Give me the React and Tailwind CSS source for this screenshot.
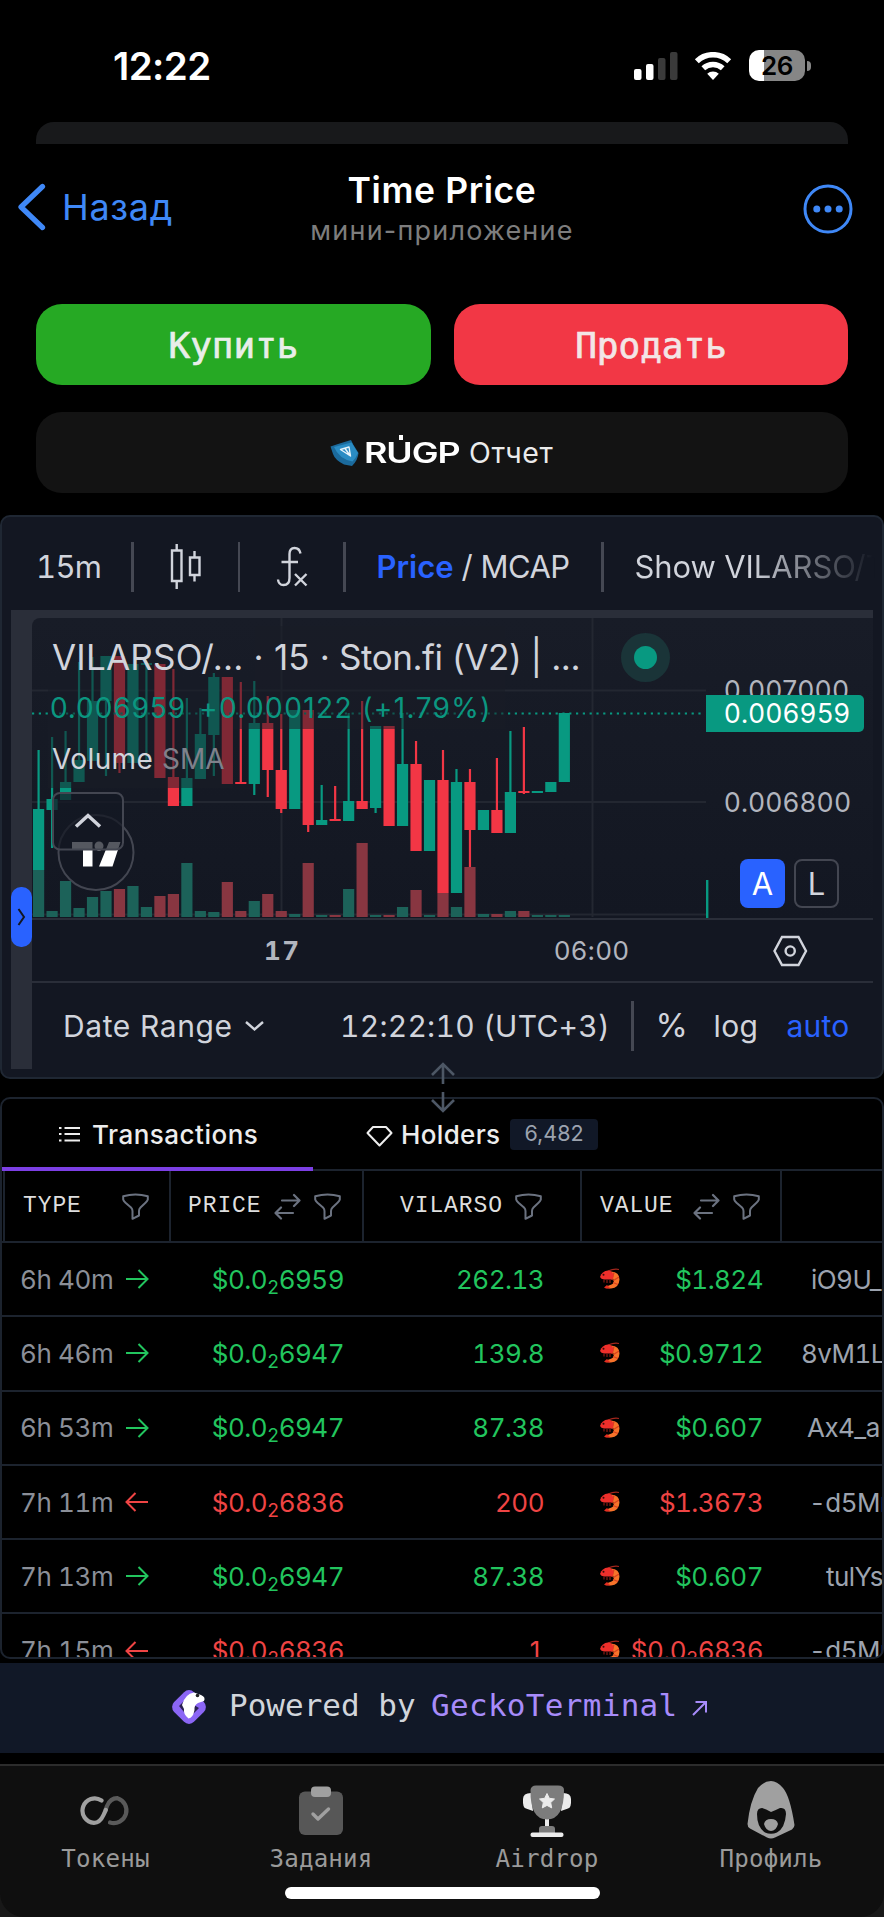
const UP = "#089981";
const DOWN = "#f23645";
const PLOT_LEFT = 32;
const PLOT_TOP = 618;
const STEP = 13.48;

// [up, wick top, body top, body bottom, wick bottom, volume top]
const candles = [
  [1, 750, 809, 870, 870, 870],
  [1, 737, 799, 810, 848, 911],
  [1, 731, 782, 800, 800, 881],
  [1, 662, 760, 782, 782, 908],
  [1, 657, 701, 761, 761, 897],
  [1, 656, 656, 701, 776, 891],
  [0, 656, 656, 763, 773, 889],
  [1, 664, 664, 763, 763, 886],
  [1, 664, 663, 665, 763, 907],
  [0, 664, 664, 778, 778, 896],
  [0, 669, 777, 806, 806, 894],
  [1, 698, 778, 806, 806, 863],
  [1, 708, 734, 779, 779, 911],
  [1, 673, 677, 735, 776, 912],
  [0, 677, 677, 784, 784, 882],
  [0, 682, 782, 784, 784, 911],
  [1, 681, 723, 784, 795, 901],
  [0, 696, 723, 770, 797, 894],
  [0, 714, 770, 809, 813, 911],
  [1, 710, 710, 809, 809, 914],
  [0, 710, 710, 825, 832, 863],
  [1, 785, 820, 825, 825, 915],
  [0, 786, 819, 821, 821, 915],
  [1, 713, 801, 821, 821, 889],
  [0, 701, 801, 809, 809, 843],
  [1, 726, 726, 808, 813, 915],
  [0, 726, 726, 826, 826, 915],
  [1, 713, 764, 826, 826, 907],
  [0, 741, 764, 851, 851, 890],
  [1, 780, 780, 851, 851, 915],
  [0, 750, 780, 893, 893, 893],
  [1, 769, 782, 893, 893, 907],
  [0, 769, 782, 830, 867, 867],
  [1, 810, 810, 830, 830, 914],
  [0, 758, 810, 833, 833, 914],
  [1, 731, 792, 833, 833, 911],
  [0, 727, 791, 793, 794, 911],
  [1, 791, 791, 793, 793, 915],
  [1, 782, 782, 792, 792, 915],
  [1, 713, 713, 782, 782, 915],
];

const transactions = [
  { age: "6h 40m", buy: true, price: "6959", amount: "262.13", value: "$1.824", from: "iO9U_", pad: "pl-[48px]" },
  { age: "6h 46m", buy: true, price: "6947", amount: "139.8", value: "$0.9712", from: "8vM1L", pad: "pl-[38px]" },
  { age: "6h 53m", buy: true, price: "6947", amount: "87.38", value: "$0.607", from: "Ax4_a", pad: "pl-[44px]" },
  { age: "7h 11m", buy: false, price: "6836", amount: "200", value: "$1.3673", from: "-d5Mr", pad: "pl-[46px]" },
  { age: "7h 13m", buy: true, price: "6947", amount: "87.38", value: "$0.607", from: "tulYs", pad: "pl-[63px]" },
  { age: "7h 15m", buy: false, price: "6836", amount: "1", value: "sub", from: "-d5Mr", pad: "pl-[46px]" },
];

function StatusBar() {
  return (
    <div className="flex h-[122px] items-start pt-[50px]">
      <div className="ml-[113px] w-[521px] text-[38.5px] leading-[32px] font-semibold tracking-[-0.6px] text-white">
        12:22
      </div>
      <svg className="mt-[2px] h-[28px] w-[44px]" viewBox="0 0 44 28">
        <rect x="0" y="17" width="7.5" height="11" rx="2" fill="#fff" />
        <rect x="12" y="12" width="7.5" height="16" rx="2" fill="#fff" />
        <rect x="24" y="6" width="7.5" height="22" rx="2" fill="#3a3a3a" />
        <rect x="36" y="0" width="7.5" height="28" rx="2" fill="#3a3a3a" />
      </svg>
      <svg className="mt-[2px] ml-[16px] h-[28px] w-[38px]" viewBox="0 0 38 28">
        <path d="M2.8 10.2a23.5 23.5 0 0 1 32.4 0" fill="none" stroke="#fff" strokeWidth="5.6" transform="translate(0 -1)" />
        <path d="M9.3 16.3a14.2 14.2 0 0 1 19.4 0" fill="none" stroke="#fff" strokeWidth="5.4" />
        <path d="M19 28l-5.8-6.2a8.2 8.2 0 0 1 11.6 0z" fill="#fff" />
      </svg>
      <div className="ml-[17px] h-[31px] w-[56px] rounded-[10px] bg-[linear-gradient(90deg,#fff_15px,#868686_15px)] text-center text-[26px] leading-[32px] font-semibold tracking-[-0.3px] text-black">
        26
      </div>
      <div className="mt-[11px] ml-[2px] h-[10px] w-[3.5px] rounded-r-full bg-[#868686]" />
    </div>
  );
}

function Header() {
  return (
    <header className="flex h-[160px]">
      <div className="flex h-[126px] w-[264px] items-center pl-[17px] text-[#3f88f7]">
        <svg className="h-[48px] w-[30px]" viewBox="0 0 30 48" fill="none" stroke="currentColor" strokeWidth="5.2" strokeLinecap="round" strokeLinejoin="round">
          <path d="M25.5 3.5L4 24l21.5 20.5" />
        </svg>
        <span className="ml-[15px] text-[36px] tracking-[0.7px]">Назад</span>
      </div>
      <div className="w-[356px] pt-[25px] text-center">
        <h1 className="text-[35.5px] leading-[44px] font-semibold tracking-[0.6px] text-white">Time Price</h1>
        <p className="text-[27px] leading-[36px] tracking-[1.2px] text-[#7d7d7d]">мини-приложение</p>
      </div>
      <svg className="mt-[39px] ml-[182px] h-[52px] w-[52px] text-[#3f88f7]" viewBox="0 0 52 52" fill="currentColor">
        <circle cx="26" cy="26" r="23" fill="none" stroke="currentColor" strokeWidth="3" />
        <circle cx="14.8" cy="26" r="3.5" />
        <circle cx="26" cy="26" r="3.5" />
        <circle cx="37.2" cy="26" r="3.5" />
      </svg>
    </header>
  );
}

function Actions() {
  return (
    <div className="grid h-[211px] grid-cols-[395px_394px] gap-x-[23px] gap-y-[27px] px-[36px] [grid-template-rows:81px_81px]">
      <button className="rounded-[26px] bg-[#26a924] pt-[3px] text-[36px] text-[#e9eee9] [-webkit-text-stroke:0.7px_#e9eee9] [font-family:'DejaVu_Sans_Mono',monospace]">
        Купить
      </button>
      <button className="rounded-[26px] bg-[#f23745] pt-[3px] text-[36px] text-[#f3e6e6] [-webkit-text-stroke:0.7px_#f3e6e6] [font-family:'DejaVu_Sans_Mono',monospace]">
        Продать
      </button>
      <button className="col-span-2 flex items-center rounded-[26px] bg-[#131313] pl-[294px] text-left text-white">
        <svg className="h-[28px] w-[30px]" viewBox="0 0 30 28">
          <path d="M.500 7.500L8 5 21 1l2.500 5L28.500 14Q28 21 22 27L14 25.500Q5 21 3 15z" fill="#1b6a9c" />
          <path d="M4 8L21.500 3.500 28 14Q26 19 22.500 22.500Q9 20 4 8z" fill="#2a8cc4" />
          <path d="M10.500 10.500L19 8l1.500 9zM15 9.500l5.500 7.500" fill="none" stroke="#e8f4fb" strokeWidth="1.4" strokeLinejoin="round" />
        </svg>
        <span className="relative ml-[4px] w-[105px]">
          <span className="inline-block origin-left scale-x-[1.28] text-[28px] font-semibold tracking-[-0.8px]">RUGP</span>
          <span className="absolute top-[3px] left-[35px] h-[5px] w-[4px] bg-white" />
        </span>
        <span className="pt-[1px] text-[28.500px] tracking-[0.6px] text-[#ebebeb]">Отчет</span>
      </button>
    </div>
  );
}

function Divider() {
  return <span className="h-[50px] w-[2.5px] shrink-0 bg-[#454853]" />;
}

function ChartToolbar() {
  return (
    <div className="flex h-[95px] items-center overflow-hidden pt-[9px] text-[31px] whitespace-nowrap text-[#d1d4dc]">
      <span className="ml-[34px] w-[95px] shrink-0 tracking-[-0.700px] tabular-nums">15m</span>
      <Divider />
      <svg className="mx-[36px] h-[48px] w-[32px] shrink-0" viewBox="0 0 32 48" fill="none" stroke="currentColor" strokeWidth="2.4">
        <path d="M6.700 1v6.500M6.700 38v8M2 7.500h9.500v30.500H2zM24.500 8v6.500M24.500 32v6.500M20 14.500h9.500V32H20z" />
      </svg>
      <Divider />
      <svg className="mx-[33.500px] h-[42px] w-[36px] shrink-0" viewBox="0 0 36 42" fill="none" stroke="currentColor" strokeWidth="2.400">
        <path d="M26.500 7.500Q25.500 2 20.500 2Q15.500 2 15.500 8V32Q15.500 39 9.500 39Q4.500 39 4 33.500M7.500 16h16.500M21 28l11.500 11.500M32.500 28L21 39.500" />
      </svg>
      <Divider />
      <span className="ml-[31px] w-[85px] shrink-0 font-semibold tracking-[0px] text-[#2962ff]">Price</span>
      <span className="w-[139.500px] shrink-0 tracking-[-0.500px]">/ MCAP</span>
      <Divider />
      <span className="ml-[31px] w-[240px] shrink-0 bg-[linear-gradient(90deg,#d1d4dc_48%,#131722_99%)] bg-clip-text tracking-[-0.100px] text-transparent">
        Show VILARSO/T
      </span>
    </div>
  );
}

function Plot() {
  return (
    <svg className="block h-[300px] w-[841px]" viewBox={`${PLOT_LEFT} ${PLOT_TOP} 841 300`}>
      <g stroke="#232731" strokeWidth="2">
        <path d="M281.500 618V917M592.500 618V917M32 690.500H706M32 802H706M32 914.500H706" />
      </g>
      {candles.map(([up, wickTop, top, bottom, wickBottom, volume], i) => {
        const x = 33 + i * STEP;
        const color = up ? UP : DOWN;
        return (
          <g key={i} fill={color}>
            <rect x={x} y={volume} width="11.200" height={917 - volume} fill={up ? "#1c6259" : "#883641"} />
            <rect x={x + 4.500} y={wickTop} width="2.200" height={wickBottom - wickTop} />
            <rect x={x} y={top} width="11.200" height={bottom - top} />
          </g>
        );
      })}
      <rect x="706" y="880" width="2.400" height="38" fill={UP} />
      <path d="M32 713.500H702" stroke={UP} strokeWidth="2" strokeDasharray="2.200 4.600" />
      <g fill="#181c27" opacity="0.52">
        <rect x="48" y="626" width="457" height="103" />
        <rect x="48" y="729" width="185" height="59" />
      </g>
    </svg>
  );
}

function PriceScale() {
  return (
    <div className="absolute top-0 left-[674px] h-[300px] w-[167px] text-[26.500px] leading-[37px] tracking-[0.600px] text-[#b2b5be]">
      <div className="absolute top-[54px] left-[18px]">0.007000</div>
      <div className="absolute top-[77px] left-0 h-[37px] w-[158px] rounded-r-[5px] bg-[#089981] pl-[18px] text-white">
        0.006959
      </div>
      <div className="absolute top-[165.500px] left-[18px]">0.006800</div>
      <div className="absolute top-[241px] left-[34px] flex gap-[9px] text-[31px] leading-[49px] tracking-normal text-[#d1d4dc]">
        <span className="h-[49px] w-[45px] rounded-[8px] bg-[#2962ff] text-center text-white">A</span>
        <span className="h-[49px] w-[45px] rounded-[8px] border-2 border-[#434651] text-center leading-[46px]">L</span>
      </div>
    </div>
  );
}

function Legend() {
  return (
    <div className="absolute top-0 left-[20px] whitespace-nowrap text-[#d1d4dc]">
      <div className="flex h-[78px] items-center text-[35px]">
        <span className="w-[287px] tracking-[0.200px]">VILARSO/... · 15 ·</span>
        <span className="w-[245px] tracking-[-0.450px]">Ston.fi (V2) | ...</span>
        <span className="mt-[1px] ml-[37px] flex h-[49px] w-[49px] items-center justify-center rounded-full bg-[#1a3438]">
          <span className="h-[23px] w-[23px] rounded-full bg-[#089981]" />
        </span>
      </div>
      <div className="-ml-[2px] flex h-[24px] items-center text-[28px] tracking-[0.900px] text-[#0b9680]">
        <span className="w-[149px]">0.006959</span>
        <span className="tracking-[1.400px]">+0.000122 (+1.79%)</span>
      </div>
      <div className="flex h-[78px] items-center text-[28px]">
        <span className="w-[110px] tracking-[0.400px]">Volume</span>
        <span className="text-[#7e818b]">SMA</span>
      </div>
    </div>
  );
}

function TradingViewBadge() {
  return (
    <svg className="absolute top-[172px] left-[18px] h-[122px] w-[90px]" viewBox="50 790 90 122">
      <circle cx="96" cy="852.500" r="37.500" fill="#131722" stroke="#434651" strokeWidth="2" />
      <path d="M72 842h20.500v24.500H83V849.500H72zM109 842h11.500l-8 24.500H99z" fill="#fff" />
      <circle cx="99" cy="846" r="4.500" fill="#fff" />
      <rect x="53" y="793" width="70" height="56.500" rx="7" fill="#141823" fillOpacity="0.720" stroke="#434651" strokeWidth="2" />
      <path d="M76 826.500L88 815.500l12 11" fill="none" stroke="#d1d4dc" strokeWidth="3.500" />
    </svg>
  );
}

function ChartPanel() {
  return (
    <section className="relative h-[564px] rounded-[10px] border-2 border-[#1f2733] bg-[#131722]">
      <div className="-mt-[2px]">
        <ChartToolbar />
      </div>
      <div className="mx-[9px] flex h-[459px] bg-[linear-gradient(#2a2e39,#2a2e39)] bg-[length:100%_20px] bg-no-repeat">
        <div className="flex w-[21px] shrink-0 items-center bg-[#2a2e39] pt-[155px]">
          <div className="flex h-[60px] w-[21px] items-center justify-center rounded-[10px] bg-[#2962ff]">
            <svg className="h-[18px] w-[9px]" viewBox="0 0 9 18" fill="none" stroke="#131722" strokeWidth="2">
              <path d="M1.500 1L7 9l-5.500 8" />
            </svg>
          </div>
        </div>
        <div className="mt-[8px] flex-1 rounded-tl-[8px] bg-[linear-gradient(#181c27,#131722_300px)]">
          <div className="relative">
            <Plot />
            <PriceScale />
            <Legend />
            <TradingViewBadge />
          </div>
          <div className="flex h-[63px] items-center border-t-2 border-[#2a2e39] text-[26px] text-[#b2b5be]">
            <span className="w-[316px] pl-[232px] font-bold tracking-[1.500px] tabular-nums">17</span>
            <span className="ml-[206px] w-[218px] tracking-[0.500px]">06:00</span>
            <svg className="h-[32px] w-[36px] text-[#d1d4dc]" viewBox="0 0 36 32" fill="none" stroke="currentColor" strokeWidth="2.400">
              <path d="M10 2h16.500l7.500 14-7.500 14H10L2.500 16z" />
              <circle cx="18.200" cy="16" r="4.600" />
            </svg>
          </div>
          <div className="flex h-[88px] items-center border-t-2 border-[#2a2e39] text-[30px] whitespace-nowrap text-[#d1d4dc]">
            <span className="ml-[31px] w-[182px] tracking-[0.600px]">Date Range</span>
            <svg className="h-[12px] w-[19px]" viewBox="0 0 19 12" fill="none" stroke="currentColor" strokeWidth="2.400">
              <path d="M1 2l8.500 7.500L18 2" />
            </svg>
            <span className="ml-[76px] w-[291px] tracking-[0.250px] tabular-nums">12:22:10 (UTC+3)</span>
            <Divider />
            <span className="ml-[22px] w-[58px] text-[33px]">%</span>
            <span className="w-[73px] tracking-[0.400px]">log</span>
            <span className="tracking-[0.200px] text-[#2962ff]">auto</span>
          </div>
        </div>
      </div>
    </section>
  );
}

function ResizeHandle() {
  return (
    <div className="relative z-10 h-[18px]">
      <svg className="absolute -top-[17px] left-[429px] h-[52px] w-[28px]" viewBox="0 0 28 52" fill="none" stroke="#4d5765" strokeWidth="2.600">
        <path d="M14 2v20M3 13L14 2l11 11M14 30v19M3 38l11 11 11-11" />
      </svg>
    </div>
  );
}

function Funnel() {
  return (
    <svg className="h-[27px] w-[27px] shrink-0" viewBox="0 0 27 27" fill="none" stroke="#6b7280" strokeWidth="2" strokeLinejoin="round">
      <path d="M1.200 3.200Q13.500 0 25.800 3.200V6.500Q25.500 8 23.500 9.800L18.500 14.500Q17 16 17 18V22.500L10.500 25.800V18Q10.500 16 9 14.500L3.500 9.800Q1.500 8 1.200 6.500z" />
    </svg>
  );
}

function Swap() {
  return (
    <svg className="h-[27px] w-[27px] shrink-0" viewBox="0 0 27 27" fill="none" stroke="#6b7280" strokeWidth="2.200" strokeLinecap="round" strokeLinejoin="round">
      <path d="M8 7.500h17.500M20 2l5.500 5.500L20 13M19 20H1.500M7 14.500L1.500 20 7 25.500" />
    </svg>
  );
}

function Shrimp() {
  return (
    <svg className="h-[22px] w-[22px] shrink-0" viewBox="0 0 22 22">
      <path d="M9 3Q15 .500 20 1.500" fill="none" stroke="#a3261c" strokeWidth="1.200" />
      <path d="M12 3.500Q20.500 4 20.500 11.500Q20 20 12 20.500L6 20Q8 17.500 12.500 16.500Q15.500 15 14.500 12z" fill="#f7732a" />
      <path d="M15 4.500l-2 7.500M20 9l-5.500 3.500M19 16.500l-5-2" stroke="#d8401f" strokeWidth="1.200" />
      <path d="M1 9Q3 3 9 2.500Q14.500 3 14.500 8.500L13 11.500H5Q2 11 1 9z" fill="#ee2f2b" />
      <path d="M5 12v2.500M8 12v3M11 12v3" stroke="#7c1712" strokeWidth="1.300" />
      <path d="M5 19.500l3-2.500 3.500 3.500H7z" fill="#e52e22" />
      <circle cx="4.500" cy="6.800" r="1" fill="#3a0a08" />
    </svg>
  );
}

function SubPrice({ digits }) {
  return (
    <>
      $0.0<span className="relative top-[5px] text-[19px]">2</span>
      {digits}
    </>
  );
}

function TransactionsPanel() {
  return (
    <section className="h-[562px] overflow-hidden rounded-[10px] border-2 border-[#1c232e] text-[26px] whitespace-nowrap">
      <div className="relative flex h-[72px] items-center border-b-2 border-[#1c232e] font-medium text-[#ededed]">
        <svg className="ml-[57px] h-[18px] w-[22px]" viewBox="0 0 22 18" fill="none" stroke="currentColor" strokeWidth="2">
          <path d="M0 3h2.500M0 9h2.500M0 15.500h2.500M5.500 3H21M5.500 9H21M5.500 15.500H21" />
        </svg>
        <span className="ml-[11px] w-[274px] tracking-[0.500px]">Transactions</span>
        <svg className="mt-[3px] h-[22px] w-[27px]" viewBox="0 0 27 22" fill="none" stroke="currentColor" strokeWidth="2" strokeLinejoin="round">
          <path d="M7 2h13l5.500 6L13.500 20.500 1.500 8z" />
        </svg>
        <span className="ml-[8px] w-[109px] tracking-[0.350px]">Holders</span>
        <span className="h-[31px] w-[88px] rounded-[4px] bg-[#111827] text-center text-[21.500px] leading-[29px] font-normal text-[#9ca3af]">
          6,482
        </span>
        <span className="absolute -bottom-[2px] left-0 h-[4px] w-[311px] bg-[#7c3fe4]" />
      </div>
      <div className="flex h-[72px] border-b-2 border-[#1c232e] text-[23px] tracking-[0.900px] text-[#dedede] [font-family:'Liberation_Mono',monospace]">
        <div className="ml-[1px] flex w-[168px] items-center border-x-2 border-[#1c232e] pl-[18px]">
          <span className="w-[99px]">TYPE</span>
          <Funnel />
        </div>
        <div className="flex w-[193px] items-center border-r-2 border-[#1c232e] pl-[17px]">
          <span className="w-[86px]">PRICE</span>
          <Swap />
          <span className="w-[13px]" />
          <Funnel />
        </div>
        <div className="flex w-[218px] items-center border-r-2 border-[#1c232e] pl-[36px]">
          <span className="w-[115px]">VILARSO</span>
          <Funnel />
        </div>
        <div className="flex w-[200px] items-center border-r-2 border-[#1c232e] pl-[18px]">
          <span className="w-[93px]">VALUE</span>
          <Swap />
          <span className="w-[13px]" />
          <Funnel />
        </div>
      </div>
      {transactions.map((tx) => (
        <div
          className={`flex h-[74.300px] items-center border-b-2 border-[#1c232e] tracking-[-0.550px] tabular-nums ${tx.buy ? "text-[#22c55e]" : "text-[#ef4444]"}`}
          key={tx.age}
        >
          <span className="ml-[18px] w-[105px] tracking-[-0.400px] text-[#8b8f98]">{tx.age}</span>
          <svg className={tx.buy ? "h-[20px] w-[24px]" : "h-[20px] w-[24px] -scale-x-100"} viewBox="0 0 24 20" fill="none" stroke="currentColor" strokeWidth="2">
            <path d="M1 10h21.500M13.500 1l9 9-9 9" />
          </svg>
          <span className="w-[195px] text-right">
            <SubPrice digits={tx.price} />
          </span>
          <span className="w-[200px] text-right">{tx.amount}</span>
          <span className="ml-[55px]">
            <Shrimp />
          </span>
          <span className="w-[142px] text-right">{tx.value === "sub" ? <SubPrice digits={tx.price} /> : tx.value}</span>
          <span className={`w-[119px] shrink-0 overflow-hidden text-[#9ca3af] ${tx.pad}`}>{tx.from}</span>
        </div>
      ))}
    </section>
  );
}

function PoweredBy() {
  return (
    <div className="mt-[4px] flex h-[90px] items-center bg-[#111827] pb-[5px] text-[31px] text-[#d1d5db] [font-family:'DejaVu_Sans_Mono',monospace]">
      <svg className="mt-[3px] ml-[170px] h-[38px] w-[38px]" viewBox="0 0 38 38">
        <rect x="5" y="5" width="28" height="28" rx="7" fill="#8b66f5" transform="rotate(45 19 19)" />
        <path d="M9 18l5-5v11zM29 20l-6 6 1-9z" fill="#2a2050" />
        <path d="M12 17Q15 6 24 4.500L31 7Q36 9 34 13L28 15Q24 17 24.500 22Q23 30 18.500 30.500Q13 26 14 21z" fill="#fff" />
        <circle cx="27.500" cy="7.500" r="1.800" fill="#222" />
      </svg>
      <span className="ml-[21px] w-[202px]">Powered by</span>
      <span className="w-[261px] tracking-[0.300px] text-[#a78bfa]">GeckoTerminal</span>
      <svg className="mt-[4px] h-[16px] w-[16px] text-[#a78bfa]" viewBox="0 0 16 16" fill="none" stroke="currentColor" strokeWidth="2">
        <path d="M1 15L14 2M3.500 2H14v10.500" />
      </svg>
    </div>
  );
}

function TabBar() {
  return (
    <nav className="mt-[11px] h-[153px] bg-[#181818]">
      <div className="h-[153px] rounded-b-[24px] border-t-2 border-[#2c2c2c] bg-[#0f0f0f]">
        <div className="flex h-[121px] pl-[9px] text-[24.200px] leading-[32px] tracking-[0.150px] text-[#9a9a9a] [font-family:'DejaVu_Sans_Mono',monospace]">
          <div className="flex w-[193px] shrink-0 flex-col items-center">
            <svg className="mt-[15px] h-[58px] w-[54px]" viewBox="0 0 54 58" fill="none" strokeWidth="4.200" strokeLinecap="round">
              <path d="M31 41.500A12.200 12.200 0 1 0 38.500 17.200Q31.500 17 28 25L26.500 29" stroke="#5a5a5a" />
              <path d="M22.500 19.500A12.200 12.200 0 1 0 15 41.800Q21 41.800 24.500 34L26.800 29" stroke="#a0a0a0" />
            </svg>
            <span className="mt-[4px]">Токены</span>
          </div>
          <div className="flex w-[238px] shrink-0 flex-col items-center">
            <svg className="mt-[15px] h-[58px] w-[46px]" viewBox="0 0 46 58">
              <rect x="1" y="10.500" width="44" height="43.500" rx="6" fill="#575757" />
              <rect x="13" y="5.500" width="20" height="10.500" rx="4" fill="#a0a0a0" />
              <path d="M15 33l5 5L30.500 28" fill="none" stroke="#a0a0a0" strokeWidth="3.400" strokeLinecap="round" strokeLinejoin="round" />
            </svg>
            <span className="mt-[4px]">Задания</span>
          </div>
          <div className="flex w-[214px] shrink-0 flex-col items-center">
            <svg className="mt-[15px] h-[58px] w-[50px]" viewBox="0 0 50 58">
              <path d="M9 12Q1 12 1 18Q.500 27 4 27.500L11 30L9 12zM41 12Q49 12 49 18Q49.500 27 46 27.500L39 30z" fill="#ebebeb" />
              <rect x="23" y="36" width="4" height="12" fill="#ebebeb" />
              <path d="M8.500 9Q9 4.500 14 4.500H36Q42 4.500 42 9Q42 38.500 25 38.500T8.500 9z" fill="#7c7c7c" />
              <path d="M25 12.500l2.300 4.800 5.200.700-3.800 3.600 1 5.300-4.700-2.500-4.700 2.500 1-5.300-3.800-3.600 5.200-.700z" fill="#ebebeb" stroke="#ebebeb" strokeLinejoin="round" />
              <path d="M17 52V48Q17 45 20 45H30Q33 45 33 48V52z" fill="#7c7c7c" />
              <rect x="8.500" y="51.500" width="33" height="4.500" rx="2" fill="#ebebeb" />
            </svg>
            <span className="mt-[4px]">Airdrop</span>
          </div>
          <div className="flex w-[234px] shrink-0 flex-col items-center">
            <svg className="mt-[15px] h-[58px] w-[48px]" viewBox="0 0 48 58">
              <path d="M24 0Q30 0 36 7Q43 15 47.500 44Q47.500 46.500 45 48.500L28 56.500Q24 58.500 20 56.500L3 47.500Q.500 46 .500 43Q3 20 11 7Q17 0 24 0z" fill="#a0a0a0" />
              <path d="M24 31Q29 29 33 27Q39 26 39 33Q38 47 30 51.500Q24 54 18 51.500Q10 46 10 33Q10 27 15 27Q19 28 24 31z" fill="#0f0f0f" />
              <path d="M17 43Q18 38 24 38T31 43Q29 50 24 50T17 43z" fill="#a0a0a0" />
            </svg>
            <span className="mt-[4px]">Профиль</span>
          </div>
        </div>
        <div className="ml-[285px] h-[12px] w-[315px] rounded-full bg-white" />
      </div>
    </nav>
  );
}

export default function App() {
  return (
    <main className="h-[1917px] w-[884px] overflow-hidden bg-black [font-family:Inter,sans-serif]">
      <StatusBar />
      <div className="mx-[36px] h-[22px] rounded-t-[18px] bg-[#18191b]" />
      <Header />
      <Actions />
      <ChartPanel />
      <ResizeHandle />
      <TransactionsPanel />
      <PoweredBy />
      <TabBar />
    </main>
  );
}
